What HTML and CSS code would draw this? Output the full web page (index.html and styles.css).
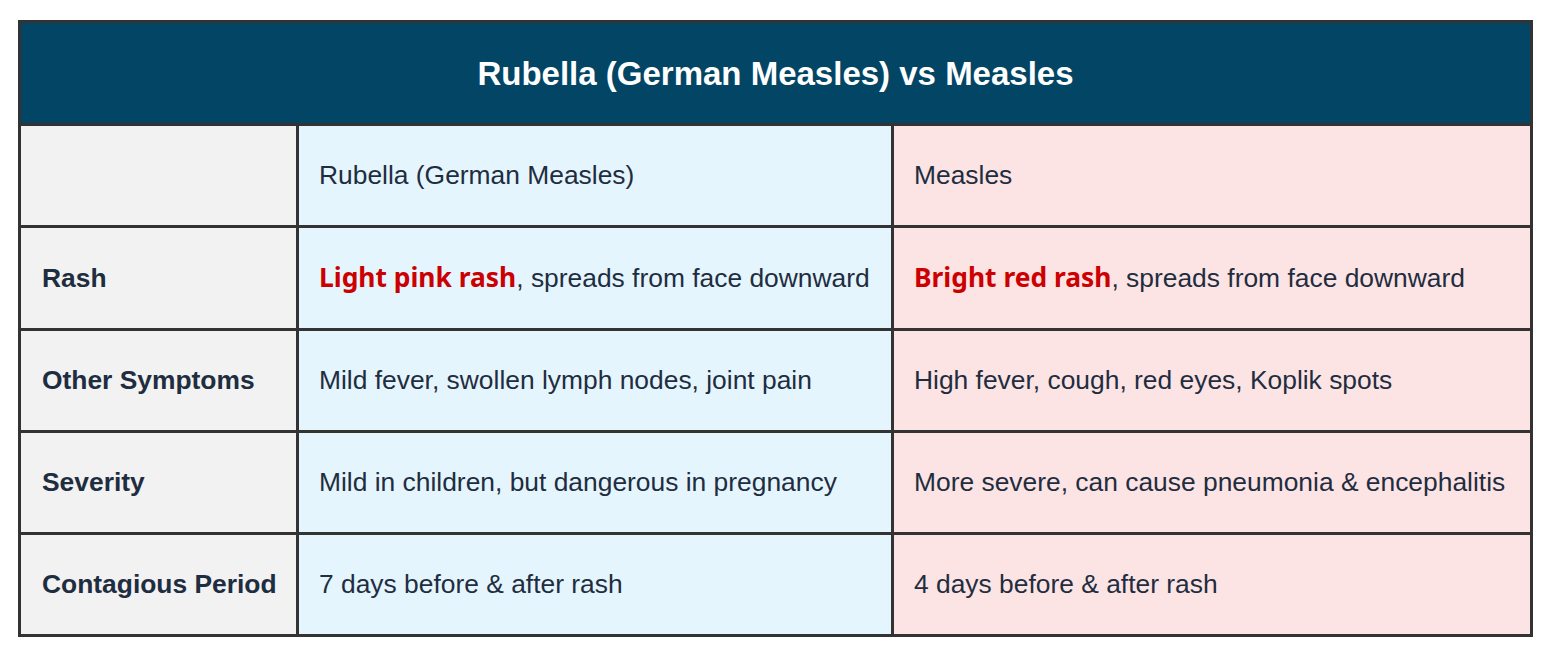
FILE: index.html
```html
<!DOCTYPE html>
<html lang="en">
<head>
<meta charset="utf-8">
<title>Rubella vs Measles</title>
<link rel="stylesheet" href="styles.css">
</head>
<body>
<div class="page">
<table class="compare">
  <colgroup>
    <col class="c-label">
    <col class="c-rubella">
    <col class="c-measles">
  </colgroup>
  <thead>
    <tr><th colspan="3" class="title">Rubella (German Measles) vs Measles</th></tr>
  </thead>
  <tbody>
    <tr>
      <td class="label"></td>
      <td class="rubella">Rubella (German Measles)</td>
      <td class="measles">Measles</td>
    </tr>
    <tr>
      <td class="label">Rash</td>
      <td class="rubella"><strong class="hl">Light pink rash</strong>, spreads from face downward</td>
      <td class="measles"><strong class="hl">Bright red rash</strong>, spreads from face downward</td>
    </tr>
    <tr>
      <td class="label">Other Symptoms</td>
      <td class="rubella">Mild fever, swollen lymph nodes, joint pain</td>
      <td class="measles">High fever, cough, red eyes, Koplik spots</td>
    </tr>
    <tr>
      <td class="label">Severity</td>
      <td class="rubella">Mild in children, but dangerous in pregnancy</td>
      <td class="measles">More severe, can cause pneumonia &amp; encephalitis</td>
    </tr>
    <tr>
      <td class="label">Contagious Period</td>
      <td class="rubella">7 days before &amp; after rash</td>
      <td class="measles">4 days before &amp; after rash</td>
    </tr>
  </tbody>
</table>
</div>
</body>
</html>
```

FILE: styles.css
```css
html, body {
  margin: 0;
  padding: 0;
  background: #ffffff;
}

.page {
  padding: 20px 0 0 18px;
}

.compare {
  width: 1512px;
  table-layout: fixed;
  border-collapse: collapse;
  border: 3px solid #333333;
  font-family: "Liberation Sans", Arial, sans-serif;
  font-size: 26.4px;
  color: #1f2d40;
}

.c-label { width: 278px; }
.c-rubella { width: 595px; }
.c-measles { width: 639px; }

.compare th,
.compare td {
  border: 3px solid #333333;
  text-align: left;
  vertical-align: middle;
  white-space: nowrap;
}

.compare .title {
  background: #024565;
  color: #ffffff;
  font-size: 33px;
  font-weight: bold;
  text-align: center;
  line-height: 40px;
  padding: 31px 0 29px;
}

.compare td {
  line-height: 30px;
  padding: 34px 20px 35px 20px;
}

.compare .label {
  background: #f2f2f2;
  font-weight: bold;
  padding-left: 21px;
}

.compare .rubella {
  background: #e5f5fe;
}

.compare .measles {
  background: #fde4e4;
}

.hl {
  font-family: "Noto Sans", "Open Sans", sans-serif;
  font-weight: bold;
  color: #cc0000;
}
```
